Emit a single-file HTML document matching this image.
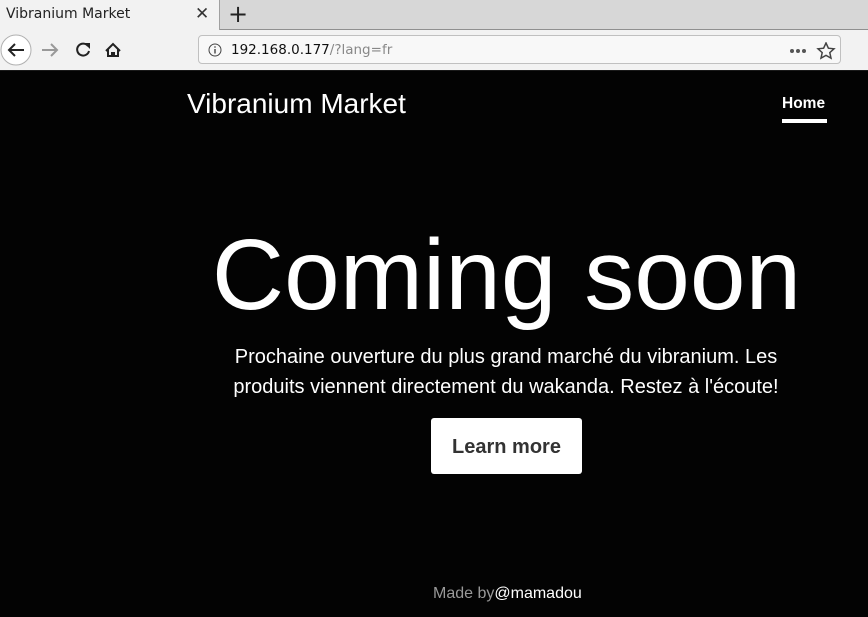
<!DOCTYPE html>
<html><head><style>
*{margin:0;padding:0;box-sizing:border-box}
body{width:868px;height:617px;overflow:hidden;font-family:"Liberation Sans",sans-serif;background:#000;position:relative}
.tabs{position:absolute;left:0;top:0;width:868px;height:30px;background:#d7d7d7;border-bottom:1px solid #8f8f8f}
.tab{position:absolute;left:0;top:0;width:220px;height:30px;background:#f2f2f2;border-right:1px solid #a0a0a0}
.tab span{position:absolute;left:6px;top:6px;font-family:"DejaVu Sans",sans-serif;font-size:14px;color:#222}
.x{position:absolute;left:195px;top:4px;font-size:17px;color:#333;font-family:"DejaVu Sans",sans-serif}
.plus{position:absolute;left:228px;top:0px;font-size:24px;color:#222;font-family:"DejaVu Sans",sans-serif}
.tool{position:absolute;left:0;top:30px;width:868px;height:41px;background:#f2f2f2;border-bottom:1px solid #1a1a1a}
.url{position:absolute;left:198px;top:5px;width:643px;height:29px;background:#f8f8f8;border:1px solid #c0c0c0;border-radius:4px}
.url .t{position:absolute;left:32px;top:6px;font-family:"DejaVu Sans",sans-serif;font-size:13.5px;color:#111}
.url .t i{font-style:normal;color:#888}
.page{position:absolute;left:0;top:71px;width:868px;height:546px;background:#030303}
.brand{position:absolute;left:187px;top:17px;color:#fff;font-size:28px}
.home{position:absolute;left:782px;top:24px;color:#fff;font-size:15.5px;font-weight:bold}
.uline{position:absolute;left:782px;top:48px;width:45px;height:4px;background:#fff}
h1{position:absolute;left:0;width:1013px;text-align:center;top:149px;color:#fff;font-weight:normal;font-size:100px;line-height:110px}
p{position:absolute;left:213px;width:586px;text-align:center;top:271px;color:#fff;font-size:20px;line-height:30px}
.btn{position:absolute;left:431px;top:347px;width:151px;height:56px;background:#fff;border-radius:3px;color:#333;font-weight:bold;font-size:20px;text-align:center;line-height:58px}
.foot{position:absolute;left:433px;top:514px;color:#999;font-size:16px}
.foot b{color:#fff;font-weight:normal}
</style></head><body>
<div class="tabs"><div class="tab"><span>Vibranium Market</span><div class="x">✕</div></div><div class="plus">+</div></div>
<div class="tool">
<svg style="position:absolute;left:0;top:3px" width="130" height="36">
<circle cx="16" cy="17" r="15" fill="#fff" stroke="#b0b0b0"/>
<path d="M24 17H9M15 11l-6 6 6 6" stroke="#222" stroke-width="2" fill="none"/>
<path d="M57 17H42M51 11l6 6-6 6" stroke="#999" stroke-width="2" fill="none"/>
<path d="M88 13a6 6 0 1 0 1 5" stroke="#222" stroke-width="2" fill="none"/><path d="M84 10h6v6z" fill="#222"/>
<path d="M106 18l7-7 7 7M108 16v7h10v-7" stroke="#222" stroke-width="2" fill="none"/><rect x="111" y="19" width="4" height="4" fill="#222"/>
</svg>
<div class="url"><svg style="position:absolute;left:9px;top:7px" width="14" height="14"><circle cx="7" cy="7" r="6" fill="none" stroke="#444"/><rect x="6.3" y="6" width="1.4" height="4.5" fill="#444"/><rect x="6.3" y="3.3" width="1.4" height="1.4" fill="#444"/></svg>
<div class="t">192.168.0.177<i>/?lang=fr</i></div>
<svg style="position:absolute;left:590px;top:6px" width="50" height="18"><circle cx="3" cy="9" r="2" fill="#555"/><circle cx="9" cy="9" r="2" fill="#555"/><circle cx="15" cy="9" r="2" fill="#555"/><path d="M37 1l2.4 5.2 5.6.6-4.2 3.8 1.2 5.5L37 13.3 32 16.1l1.2-5.5L29 6.8l5.6-.6z" fill="none" stroke="#444" stroke-width="1.5"/></svg>
</div></div>
<div class="page">
<div class="brand">Vibranium Market</div>
<div class="home">Home</div><div class="uline"></div>
<h1>Coming soon</h1>
<p>Prochaine ouverture du plus grand marché du vibranium. Les produits viennent directement du wakanda. Restez à l'écoute!</p>
<div class="btn">Learn more</div>
<div class="foot">Made by<b>@mamadou</b></div>
</div>
</body></html>
